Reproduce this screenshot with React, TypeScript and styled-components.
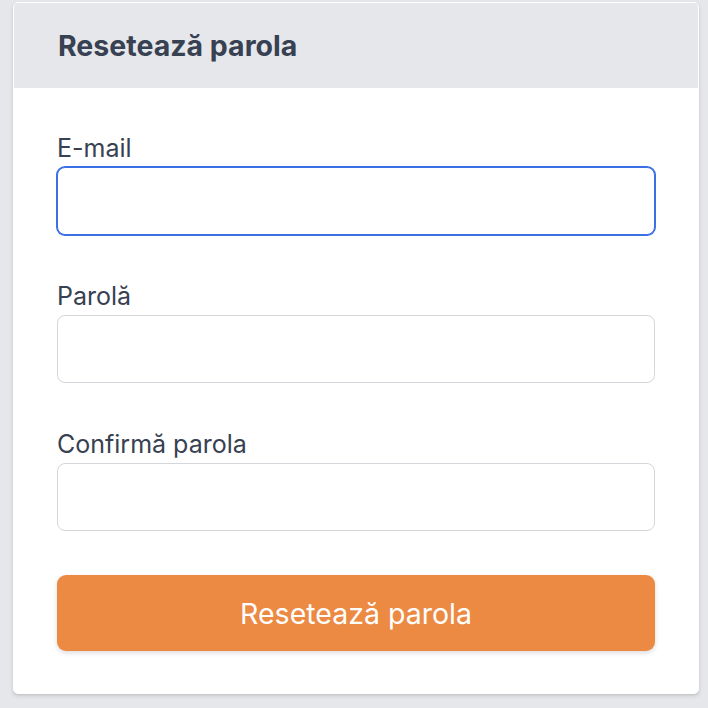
import React from "react";
import styled, { createGlobalStyle } from "styled-components";

const Global = createGlobalStyle`
  html, body { margin: 0; padding: 0; background: #e5e7eb; }
  body { font-family: Inter, "Noto Sans", "Liberation Sans", sans-serif; color: #374151; }
  * { box-sizing: border-box; }
`;

const Page = styled.div`
  padding: 2px 9px 14px 13px;
`;

const Card = styled.div`
  background: #ffffff;
  border: 1px solid #ffffff;
  border-radius: 5px;
  box-shadow: 0 2px 4px rgba(0, 0, 0, 0.12), 0 1px 2px rgba(0, 0, 0, 0.06);
  overflow: hidden;
`;

const Header = styled.div`
  background: #e5e7eb;
  height: 85px;
  display: flex;
  align-items: center;
  padding: 0 44px;
`;

const Title = styled.h1`
  margin: 0;
  font-size: 28.5px;
  font-weight: 700;
  color: #374151;
  letter-spacing: 0;
`;

const Body = styled.form`
  display: flex;
  flex-direction: column;
  padding: 46px 43px 42px 43px;
`;

const Field = styled.div`
  display: flex;
  flex-direction: column;
  gap: 5px;
  margin-bottom: 47px;
  &:last-of-type {
    margin-bottom: 44px;
  }
`;

const Label = styled.label`
  font-size: 25px;
  line-height: 28px;
  color: #374151;
`;

const Input = styled.input<{ $focused?: boolean }>`
  height: 68px;
  width: 100%;
  border-radius: 8px;
  border: 1px solid ${(p) => (p.$focused ? "#3b6fe6" : "#d4d6db")};
  box-shadow: ${(p) => (p.$focused ? "0 0 0 1px #3b6fe6" : "none")};
  outline: none;
  background: #fff;
  font-size: 20px;
  padding: 0 16px;
`;

const Button = styled.button`
  height: 76px;
  width: 100%;
  border: none;
  border-radius: 9px;
  background: #ec8a43;
  color: #ffffff;
  font-family: inherit;
  font-size: 28.5px;
  font-weight: 400;
  box-shadow: 0 2px 5px rgba(0, 0, 0, 0.14);
  cursor: pointer;
`;

export default function App() {
  return (
    <>
      <Global />
      <Page>
        <Card>
          <Header>
            <Title>Resetează parola</Title>
          </Header>
          <Body onSubmit={(e) => e.preventDefault()}>
            <Field>
              <Label>E-mail</Label>
              <Input type="email" $focused />
            </Field>
            <Field>
              <Label>Parolă</Label>
              <Input type="password" />
            </Field>
            <Field>
              <Label>Confirmă parola</Label>
              <Input type="password" />
            </Field>
            <Button type="submit">Resetează parola</Button>
          </Body>
        </Card>
      </Page>
    </>
  );
}
